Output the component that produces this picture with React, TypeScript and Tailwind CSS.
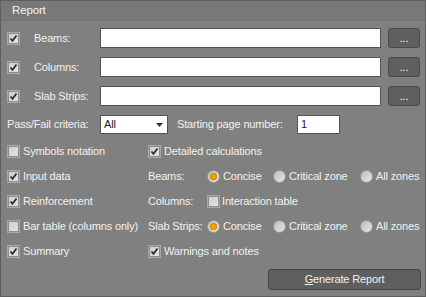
import React from "react";

const font = { fontFamily: '"Liberation Sans", Arial, sans-serif' };

function Check({ checked }: { checked?: boolean }) {
  return (
    <span className="flex h-[13px] w-[13px] shrink-0 items-center justify-center border border-[#a9a9a9] bg-[#8c8c8c] p-[1px]">
      <span className="flex h-full w-full items-center justify-center bg-gradient-to-br from-[#cfcfcf] to-[#e2e2e2]">
        {checked && (
          <svg width="9" height="9" viewBox="0 0 9 9">
            <path d="M1.5 4.5 L3.5 6.8 L7.5 1.5" fill="none" stroke="#2e2e2e" strokeWidth="1.8" />
          </svg>
        )}
      </span>
    </span>
  );
}

function Radio({ checked }: { checked?: boolean }) {
  return (
    <span className="flex h-[13px] w-[13px] shrink-0 items-center justify-center rounded-full border border-[#9a9a9a] bg-gradient-to-br from-[#bdbdbd] to-[#e6e6e6]">
      {checked && (
        <span className="h-[7px] w-[7px] rounded-full bg-[#f0a010] shadow-[inset_0_0_0_1px_#d48a00]" />
      )}
    </span>
  );
}

function CheckLabel({ checked, label }: { checked?: boolean; label: string }) {
  return (
    <div className="flex items-center gap-[3px]">
      <Check checked={checked} />
      <span>{label}</span>
    </div>
  );
}

function RadioGroup() {
  return (
    <div className="flex items-center">
      <div className="flex w-[66px] items-center gap-[3px]">
        <Radio checked />
        <span>Concise</span>
      </div>
      <div className="flex w-[87px] items-center gap-[3px]">
        <Radio />
        <span>Critical zone</span>
      </div>
      <div className="flex items-center gap-[3px]">
        <Radio />
        <span>All zones</span>
      </div>
    </div>
  );
}

function PathRow({ label }: { label: string }) {
  return (
    <div className="flex h-[20px] items-center">
      <Check checked />
      <span className="ml-[14px] w-[66px]">{label}</span>
      <div className="h-[20px] flex-1 border border-[#555555] bg-white" />
      <button className="ml-[7px] flex h-[20px] w-[32px] items-end justify-center rounded-[3px] border border-[#4a4a4a] bg-[#5f5f5f] pb-[3px] text-[11px] leading-none text-white">
        ...
      </button>
    </div>
  );
}

export default function App() {
  return (
    <div
      className="flex h-[297px] w-[426px] flex-col border border-[#5e5e5e] bg-[#808080] text-[11px] tracking-[-0.15px] text-[#f2f2f2]"
      style={font}
    >
      <div className="flex h-[20px] shrink-0 items-center border-b border-[#6f6f6f] bg-[#787878] pl-[11px] text-[11.5px]">
        Report
      </div>

      <div className="flex flex-col gap-[9px] pl-[6px] pr-[5px] pt-[7px]">
        <PathRow label="Beams:" />
        <PathRow label="Columns:" />
        <PathRow label="Slab Strips:" />
      </div>

      <div className="mt-[9px] flex h-[19px] items-center pl-[6px]">
        <span className="w-[93px]">Pass/Fail criteria:</span>
        <div className="flex h-[19px] w-[68px] items-center justify-between border border-[#555555] bg-white pl-[3px] pr-[4px] text-[#1a1a1a]">
          <span>All</span>
          <svg width="7" height="4" viewBox="0 0 7 4">
            <path d="M0 0 H7 L3.5 4 Z" fill="#333333" />
          </svg>
        </div>
        <span className="ml-[9px] w-[120px]">Starting page number:</span>
        <div className="flex h-[19px] w-[43px] items-center border border-[#555555] bg-white pl-[3px] text-[#1a1a1a]">
          1
        </div>
      </div>

      <div className="mt-[5px] grid grid-cols-[141px_1fr] auto-rows-[25px] items-center pl-[6px]">
        <CheckLabel label="Symbols notation" />
        <CheckLabel checked label="Detailed calculations" />

        <CheckLabel checked label="Input data" />
        <div className="flex items-center">
          <span className="w-[59px]">Beams:</span>
          <RadioGroup />
        </div>

        <CheckLabel checked label="Reinforcement" />
        <div className="flex items-center">
          <span className="w-[59px]">Columns:</span>
          <div className="flex items-center gap-[2px]">
            <Check />
            <span>Interaction table</span>
          </div>
        </div>

        <CheckLabel label="Bar table (columns only)" />
        <div className="flex items-center">
          <span className="w-[59px]">Slab Strips:</span>
          <RadioGroup />
        </div>

        <CheckLabel checked label="Summary" />
        <CheckLabel checked label="Warnings and notes" />
      </div>

      <div className="mt-[5px] flex justify-end pr-[4px]">
        <button className="flex h-[21px] w-[153px] items-center justify-center rounded-[3px] border border-[#474747] bg-[#5f5f5f] text-[11px] text-[#f2f2f2]">
          <span>
            <span className="underline">G</span>enerate Report
          </span>
        </button>
      </div>
    </div>
  );
}
